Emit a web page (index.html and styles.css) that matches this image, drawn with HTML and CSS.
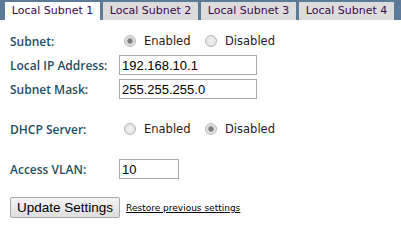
FILE: index.html
```html
<!DOCTYPE html>
<html lang="en">
<head>
    <meta charset="UTF-8">
    <title>Local Subnet</title>
    <link rel="stylesheet" href="styles.css">
</head>
<body>
    <div class="tabs">
        <a class="tab active" href="#">Local Subnet 1</a>
        <a class="tab" href="#">Local Subnet 2</a>
        <a class="tab" href="#">Local Subnet 3</a>
        <a class="tab" href="#">Local Subnet 4</a>
    </div>
    <form class="settings">
        <div class="row">
            <label class="name">Subnet:</label>
            <label class="opt"><input type="radio" name="subnet" checked> Enabled</label>
            <label class="opt"><input type="radio" name="subnet"> Disabled</label>
        </div>
        <div class="row">
            <label class="name" for="ip">Local IP Address:</label>
            <input type="text" id="ip" class="field" value="192.168.10.1">
        </div>
        <div class="row">
            <label class="name" for="mask">Subnet Mask:</label>
            <input type="text" id="mask" class="field" value="255.255.255.0">
        </div>
        <div class="row gap">
            <label class="name">DHCP Server:</label>
            <label class="opt"><input type="radio" name="dhcp"> Enabled</label>
            <label class="opt"><input type="radio" name="dhcp" checked> Disabled</label>
        </div>
        <div class="row gap">
            <label class="name" for="vlan">Access VLAN:</label>
            <input type="text" id="vlan" class="field short" value="10">
        </div>
        <div class="actions">
            <button type="button">Update Settings</button>
            <a href="#" class="restore">Restore previous settings</a>
        </div>
    </form>
</body>
</html>
```

FILE: styles.css
```css
body {
    margin: 0;
    font-family: 'DejaVu Sans', sans-serif;
    background: #fff;
}

.tabs {
    display: flex;
    gap: 3px;
    background-color: #5b7b99;
    padding: 2px 5px 0;
    height: 18px;
}

.tab {
    width: 95px;
    height: 18px;
    line-height: 17px;
    text-align: center;
    font-size: 11px;
    color: #3c0a4c;
    background-color: #dcdcdc;
    text-decoration: none;
}

.tab.active {
    background-color: #fff;
}

.settings {
    padding: 11px 10px 0;
}

.row {
    display: flex;
    align-items: center;
    height: 20px;
    margin-bottom: 4px;
}

.row.gap {
    margin-top: 20px;
}

.name {
    width: 109px;
    font-family: 'Open Sans', sans-serif;
    font-size: 12px;
    font-weight: 600;
    color: #1f4e63;
}

.opt {
    display: flex;
    align-items: center;
    width: 81px;
    font-size: 11.5px;
    color: #222;
}

.opt input {
    appearance: none;
    margin: 0 8px 0 5px;
    width: 12px;
    height: 12px;
    border: 1px solid #b5b5b5;
    border-radius: 50%;
    background: radial-gradient(#f4f4f4, #dcdcdc);
}

.opt input:checked {
    background: radial-gradient(#7a7a7a 0, #7a7a7a 2px, #cfcfcf 3px, #ececec 5px);
}

.field {
    width: 138px;
    height: 20px;
    box-sizing: border-box;
    border: 1px solid #a9a9a9;
    padding: 0 2px;
    font-family: 'Liberation Sans', sans-serif;
    font-size: 13px;
    color: #000;
}

.field.short {
    width: 60px;
}

.actions {
    display: flex;
    align-items: center;
    margin-top: 18px;
    gap: 6px;
}

button {
    height: 21px;
    padding: 0 6px;
    font-family: 'Liberation Sans', sans-serif;
    font-size: 13.5px;
    border: 1px solid #a9a9a9;
    border-radius: 2px;
    background: linear-gradient(#f4f4f4, #dedede);
}

.restore {
    font-size: 9px;
    color: #000;
}
```
